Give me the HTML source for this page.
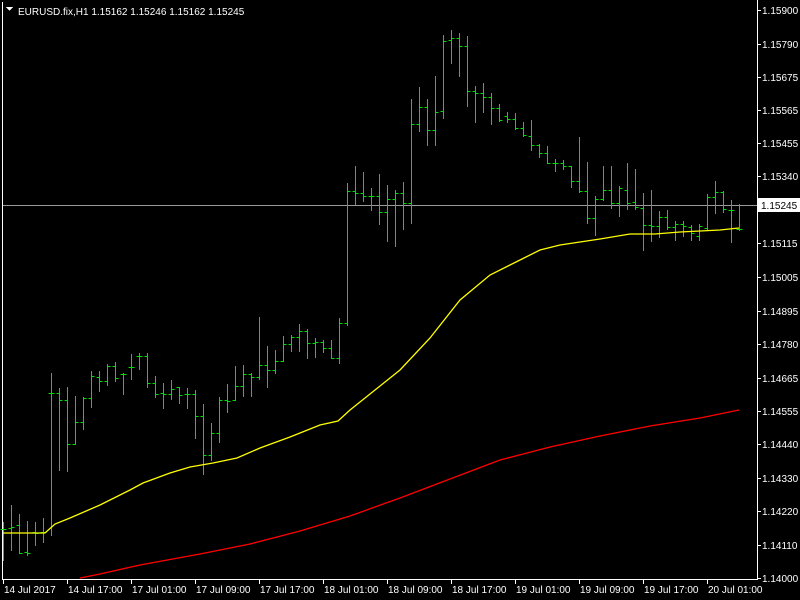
<!DOCTYPE html>
<html><head><meta charset="utf-8"><style>
html,body{margin:0;padding:0;background:#000;width:800px;height:600px;overflow:hidden}
svg{display:block}
text{font-family:"Liberation Sans",sans-serif;font-size:10px;fill:#fff}
</style></head><body>
<svg id="s" width="800" height="600" viewBox="0 0 800 600" shape-rendering="crispEdges">
<rect width="800" height="600" fill="#000"/>
<line x1="2.5" y1="2" x2="2.5" y2="580" stroke="#fff"/>
<line x1="757.5" y1="0" x2="757.5" y2="580" stroke="#fff"/>
<line x1="2" y1="579.5" x2="758" y2="579.5" stroke="#fff"/>
<line x1="3" y1="205.5" x2="757" y2="205.5" stroke="#9a9a9a"/>
<g id="bars"></g>
<polyline fill="none" stroke="#ffff00" stroke-width="1.3" shape-rendering="auto" points="3,533 45,533 55,524 70,518 100,505 130,490 143,483 170,473 190,467 213,463 237,458 260,448 290,437 320,425 338,421 350,410 375,390 400,370 430,338 460,300 490,275 520,260 540,250 560,245 580,242 600,239 630,234 655,234 680,232 720,230 739,228"/>
<polyline fill="none" stroke="#ff0000" stroke-width="1.3" shape-rendering="auto" points="80,578 100,574 140,565 200,554 250,544 300,531 350,516 400,498 450,479 500,460 550,447 600,436 650,426 700,418 739,410"/>
<g id="ax"></g>
<path d="M6 7 L13 7 L9.5 11 Z" fill="#fff"/>
<text x="18" y="15">EURUSD.fix,H1  1.15162 1.15246 1.15162 1.15245</text>
<rect x="758" y="198" width="42" height="14" fill="#fff"/>
<text x="761" y="209" style="fill:#000">1.15245</text>
</svg>
<script>
var B=[[3,522,560,529,529],[11,505,550,528,527],[19,514,553,525,553],[27,521,555,552,553],[35,522,545,532,533],[43,518,542,532,532],
[51,373,535,393,393],[59,388,470,393,400],[67,387,471,400,444],[75,396,444,444,422],[83,397,429,422,398],[91,371,407,398,376],[99,371,391,377,381],[107,364,385,381,366],[115,362,381,366,378],[123,373,394,374,374],[131,354,379,367,367],[139,353,369,356,356],[147,353,387,356,383],[155,376,397,383,394],[163,383,408,393,394],[171,380,399,394,389],[179,387,403,387,395],[187,388,408,394,394],[195,390,438,394,416],[203,404,474,416,455],[211,423,460,455,433],[219,397,442,433,400],[227,384,412,400,401],[235,366,400,400,386],[243,365,396,386,374],[251,373,396,374,377],[259,317,379,377,365],[267,346,387,365,370],[275,350,373,370,361],[283,336,361,361,344],[291,335,351,344,337],[299,324,351,337,331],[307,329,358,331,343],[315,338,357,343,342],[323,340,352,342,348],[331,340,358,348,358],[339,318,363,358,323],
[347,183,325,323,191],[355,166,204,191,193],[363,172,201,193,196],[371,188,210,196,196],[379,174,224,196,212],[387,185,241,212,199],[395,190,246,199,193],[403,182,229,193,203],[411,99,223,203,124],[419,87,131,124,107],[427,99,145,107,130],[435,76,145,130,112],[443,35,118,111,41],[451,30,63,40,38],[459,33,76,38,46],[467,36,106,46,91],[475,86,122,91,93],[483,83,112,93,97],[491,93,124,97,108],[499,104,121,108,120],[507,112,122,116,119],[515,113,129,119,128],[523,122,136,128,135],[531,120,150,136,145],[539,144,157,145,153],[547,146,163,153,163],[555,159,171,163,163],[563,160,169,163,166],[571,166,187,166,181],[579,137,192,181,191],[587,162,223,191,218],[595,196,235,218,199],[603,166,200,199,190],[611,166,208,190,203],[619,186,216,203,188],[627,163,209,190,203],[635,169,209,202,207],[643,193,250,208,225],[651,190,241,225,226],[659,211,237,226,217],[667,210,229,217,227],[675,221,240,227,224],[683,221,236,224,226],[691,225,240,227,233],[699,224,240,236,226],[707,194,229,228,197],[715,181,213,197,192],[723,191,212,192,209],[731,200,242,210,210],[739,204,230,229,229]];
var d="";B.forEach(function(b){var x=b[0]+0.5;d+="M"+x+" "+b[1]+"V"+(b[2]+1)+"M"+(x-3)+" "+(b[3]+.5)+"H"+x+"M"+x+" "+(b[4]+.5)+"H"+(x+3);});
var ns="http://www.w3.org/2000/svg";
var p=document.createElementNS(ns,"path");p.setAttribute("d",d);p.setAttribute("stroke","#00e000");p.setAttribute("fill","none");p.setAttribute("stroke-width","1");
document.getElementById("bars").appendChild(p);
var ax=document.getElementById("ax"),h="";
var L=[["1.15900",10],["1.15790",44],["1.15675",77],["1.15565",110],["1.15455",143],["1.15340",176],["1.15115",243],["1.15005",277],["1.14895",311],["1.14780",344],["1.14665",378],["1.14555",411],["1.14440",444],["1.14330",478],["1.14220",511],["1.14110",545],["1.14000",578]];
L.forEach(function(l){h+='<line x1="757" x2="761" y1="'+(l[1]+.5)+'" y2="'+(l[1]+.5)+'" stroke="#fff"/><text x="762" y="'+(l[1]+4)+'">'+l[0]+'</text>';});
var D=[["14 Jul 2017",3],["14 Jul 17:00",67],["17 Jul 01:00",131],["17 Jul 09:00",195],["17 Jul 17:00",259],["18 Jul 01:00",323],["18 Jul 09:00",387],["18 Jul 17:00",451],["19 Jul 01:00",515],["19 Jul 09:00",579],["19 Jul 17:00",643],["20 Jul 01:00",707]];
D.forEach(function(t){h+='<line x1="'+(t[1]+.5)+'" x2="'+(t[1]+.5)+'" y1="579" y2="584" stroke="#fff"/><text x="'+(t[1]+1)+'" y="593">'+t[0]+'</text>';});
ax.innerHTML=h;
</script>
</body></html>
